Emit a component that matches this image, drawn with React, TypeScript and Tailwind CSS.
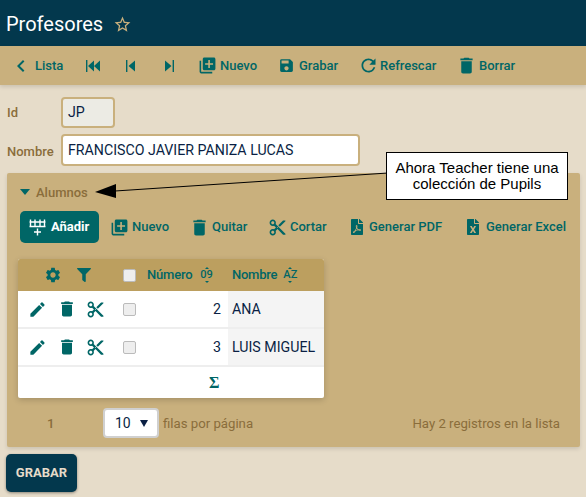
import { MdLibraryAdd, MdSave, MdRefresh, MdDelete, MdContentCut, MdSettings, MdEdit, MdChevronLeft, MdStarBorder } from 'react-icons/md';
import { FaFilter, FaFilePdf, FaFileExcel } from 'react-icons/fa';
import type { ReactNode } from 'react';

const ToolButton = ({ icon, label, className = '' }: { icon: ReactNode; label?: string; className?: string }) => (
  <div className={`flex items-center text-[#006666] text-[13px] font-medium ${className}`}>
    {icon}
    {label && <span>{label}</span>}
  </div>
);

const FastBackIcon = () => (
  <svg width="14" height="12" viewBox="0 0 14 12" fill="currentColor">
    <path d="M0 0h1.4v12H0zM2 6l6-5.5v11zM8 6l6-5.5v11z" />
  </svg>
);

const StepBackIcon = () => (
  <svg width="9" height="12" viewBox="0 0 9 12" fill="currentColor">
    <path d="M0 0h1.4v12H0zM2.5 6L9 .5v11z" />
  </svg>
);

const StepForwardIcon = () => (
  <svg width="9" height="12" viewBox="0 0 9 12" fill="currentColor">
    <path d="M7.6 0H9v12H7.6zM6.5 6L0 .5v11z" />
  </svg>
);

const GridAddIcon = () => (
  <svg width="17" height="17" viewBox="0 0 17 17" fill="none" stroke="white" strokeWidth="1.4">
    <path d="M0.5 3h16M0.5 7.5h16M1.5 0.5v7M6 0.5v7M11 0.5v7M15.5 0.5v7M8.5 9.5v7M5 13h7" />
  </svg>
);

const SortIcon = ({ label }: { label: string }) => (
  <span className="flex flex-col items-center gap-[1px] text-[11px] leading-[10px] font-medium text-[#006666]">
    <span className="w-0 h-0 border-x-[2px] border-x-transparent border-b-[2px] border-b-[#006666]" />
    <span>{label}</span>
    <span className="w-0 h-0 border-x-[2px] border-x-transparent border-t-[2px] border-t-[#006666]" />
  </span>
);

const Checkbox = () => (
  <span className="block w-[13px] h-[13px] rounded-[2px] bg-[#eeeeee] border border-[#bbbbbb] shrink-0" />
);

const PupilRow = ({ num, name }: { num: number; name: string }) => (
  <div className="flex h-[38px] items-center border-b-2 border-[#eeeeee] text-[#0a1f44] text-[14.2px]">
    <div className="flex items-center w-[105px] pl-[10px] text-[#006666]">
      <MdEdit size={19} />
      <MdDelete size={20} className="ml-[10px]" />
      <MdContentCut size={19} className="ml-[9px]" />
    </div>
    <Checkbox />
    <div className="w-[92px] text-right pr-[7px] pt-[1px]">{num}</div>
    <div className="flex-1 h-full flex items-center bg-[#f4f4f4] pl-1 pt-[1px]">{name}</div>
  </div>
);

export default function App() {
  return (
    <div className="relative w-[586px] h-[497px] overflow-hidden bg-[#e6dcc9] font-['Roboto',sans-serif]">
      {/* Title bar */}
      <header className="h-[46px] bg-[#03384d] flex items-center pl-[6px] gap-[10px]">
        <h1 className="text-white text-[20px] font-normal pt-[2px]">Profesores</h1>
        <MdStarBorder size={19} className="text-[#c9b07d] mt-[2px]" />
      </header>

      {/* Main toolbar */}
      <nav className="h-[39px] bg-[#c9b07d] shadow-[0_2px_4px_rgba(0,0,0,0.12)] flex items-center pl-[9px]">
        <ToolButton icon={<MdChevronLeft size={24} />} label="Lista" className="gap-[2px] w-[77px]" />
        <ToolButton icon={<FastBackIcon />} className="w-[40px]" />
        <ToolButton icon={<StepBackIcon />} className="w-[39px]" />
        <ToolButton icon={<StepForwardIcon />} className="w-[33px]" />
        <ToolButton icon={<MdLibraryAdd size={19} />} label="Nuevo" className="gap-[3px] w-[80px]" />
        <ToolButton icon={<MdSave size={17} />} label="Grabar" className="gap-[4px] w-[80px]" />
        <ToolButton icon={<MdRefresh size={21} />} label="Refrescar" className="gap-[1px] w-[98px]" />
        <ToolButton icon={<MdDelete size={21} />} label="Borrar" className="gap-[2px]" />
      </nav>

      {/* Form */}
      <div className="px-[7px] pt-[12px]">
        <div className="flex items-center h-[31px]">
          <label className="w-[54px] text-[13px] font-medium text-[#8a6d3b]">Id</label>
          <div className="w-[54px] h-[31px] flex items-center pl-[5px] bg-[#ecebe4] border-[2px] border-[#c9b07d] rounded-[4px] text-[#0a1f44] text-[14.2px]">JP</div>
        </div>
        <div className="flex items-center h-[32px] mt-[6px]">
          <label className="w-[54px] pt-[3px] text-[13px] font-medium text-[#8a6d3b]">Nombre</label>
          <div className="w-[299px] h-[32px] flex items-center pl-[5px] pt-[2px] bg-white border-[2px] border-[#c9b07d] rounded-[4px] text-[#0a1f44] text-[14.2px]">FRANCISCO JAVIER PANIZA LUCAS</div>
        </div>
      </div>

      {/* Alumnos collection */}
      <section className="mx-[7px] mt-[7px] w-[573px] h-[274px] bg-[#c9b07d] rounded-[2px] shadow-[0_2px_4px_rgba(0,0,0,0.12)]">
        <div className="flex items-center h-[38px] pl-[13px] gap-[6px] text-[13px] font-medium text-[#8a6d3b]">
          <span className="w-0 h-0 border-x-[5px] border-x-transparent border-t-[6px] border-t-[#006666]" />
          <span className="pt-[1px]">Alumnos</span>
        </div>
        <div className="flex items-center h-[32px] ml-[13px]">
          <div className="w-[79px] h-[32px] rounded-[5px] bg-[#006666] flex items-center gap-[5px] pl-[9px] text-white text-[13px] font-bold">
            <GridAddIcon />
            <span>Añadir</span>
          </div>
          <ToolButton icon={<MdLibraryAdd size={19} />} label="Nuevo" className="ml-[11px] gap-[3px] w-[79px]" />
          <ToolButton icon={<MdDelete size={21} />} label="Quitar" className="gap-[2px] w-[79px]" />
          <ToolButton icon={<MdContentCut size={19} />} label="Cortar" className="gap-[3px] w-[81px]" />
          <ToolButton icon={<FaFilePdf size={16} />} label="Generar PDF" className="gap-[4px] w-[116px]" />
          <ToolButton icon={<FaFileExcel size={16} />} label="Generar Excel" className="gap-[5px]" />
        </div>

        {/* Grid */}
        <div className="ml-[11px] mt-[16px] w-[306px] rounded-[2px] bg-white shadow-[0_2px_6px_rgba(0,0,0,0.18)]">
          <div className="flex items-center h-[32px] bg-[#bc9f5f] rounded-t-[2px] text-[#006666] text-[13px] font-medium">
            <div className="flex items-center w-[105px] pl-[26px] gap-[15px]">
              <MdSettings size={18} />
              <FaFilter size={14} />
            </div>
            <Checkbox />
            <span className="ml-[11px] tracking-[-0.2px]">Número</span>
            <span className="ml-[8px]"><SortIcon label="09" /></span>
            <span className="ml-[19px] tracking-[-0.2px]">Nombre</span>
            <span className="ml-[6px]"><SortIcon label="AZ" /></span>
          </div>
          <PupilRow num={2} name="ANA" />
          <PupilRow num={3} name="LUIS MIGUEL" />
          <div className="h-[31px] flex items-center pl-[191px] text-[#006666] font-bold text-[16px] font-['Liberation_Serif',serif]">Σ</div>
        </div>

        {/* Paging */}
        <div className="flex items-center h-[30px] mt-[10px] text-[13.2px] text-[#8a6d3b]">
          <span className="w-[96px] pl-[40px] pt-[1px] font-medium">1</span>
          <div className="w-[56px] h-[30px] flex items-center justify-between pl-[10px] pr-[9px] bg-white border-[2px] border-[#d0d0d0] rounded-[4px] text-[14px] text-[#0a1f44]">
            <span>10</span>
            <span className="w-0 h-0 border-x-[4px] border-x-transparent border-t-[7px] border-t-[#0a1f44]" />
          </div>
          <span className="ml-[4px] pt-[1px]">filas por página</span>
          <span className="ml-auto mr-[20px] pt-[1px]">Hay 2 registros en la lista</span>
        </div>
      </section>

      <button className="block ml-[6px] mt-[7px] w-[71px] h-[38px] rounded-[5px] bg-[#03384d] text-[#e6dcc9] text-[13px] font-bold shadow-[0_1px_3px_rgba(0,0,0,0.4)]">GRABAR</button>

      {/* Annotation over the page */}
      <svg className="absolute left-0 top-0 pointer-events-none" width="586" height="497">
        <path d="M388 173L115 191" stroke="black" strokeWidth="1" />
        <polygon points="95,192 116,184 116,198" fill="black" />
      </svg>
      <div className="absolute left-[386px] top-[152px] w-[182px] h-[48px] bg-white border border-black flex items-center justify-center text-center text-[15px] leading-[16px] text-black font-['Liberation_Sans',sans-serif]">
        Ahora Teacher tiene una<br />colección de Pupils
      </div>
    </div>
  );
}
